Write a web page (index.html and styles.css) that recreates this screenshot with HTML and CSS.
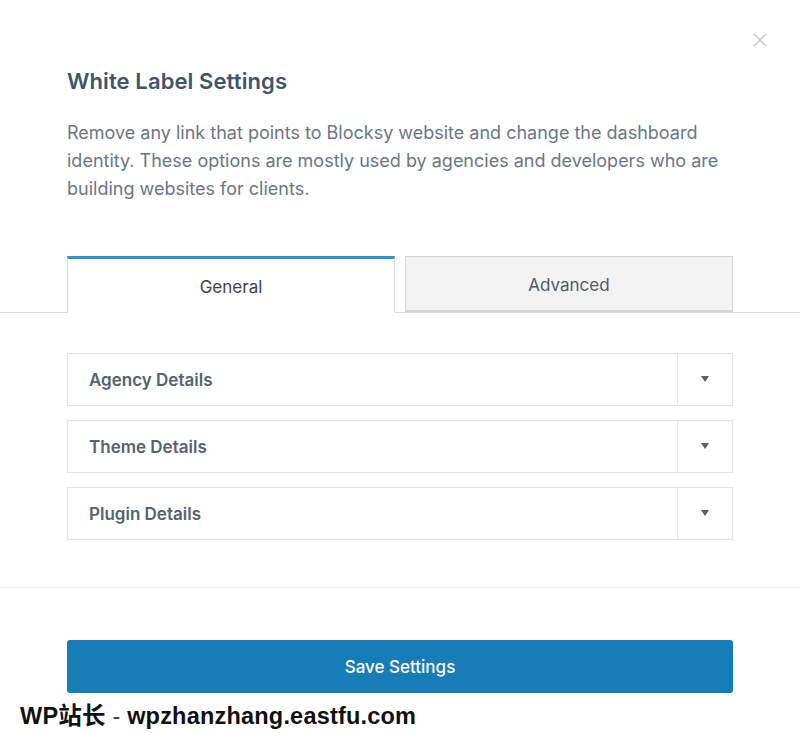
FILE: index.html
```html
<!DOCTYPE html>
<html>
<head>
<meta charset="utf-8">
<link rel="stylesheet" href="styles.css">
</head>
<body>
<div class="modal">
  <button class="close" aria-label="Close">
    <svg width="14" height="14" viewBox="0 0 14 14"><path d="M1 1L13 13M13 1L1 13" stroke="#c7cbd0" stroke-width="1.6" fill="none"/></svg>
  </button>
  <div class="head">
    <h2 class="title">White Label Settings</h2>
    <p class="desc">Remove any link that points to Blocksy website and change the dashboard identity. These options are mostly used by agencies and developers who are building websites for clients.</p>
  </div>
  <div class="tabs-wrap">
    <div class="tabs">
      <div class="tab active">General</div>
      <div class="tab">Advanced</div>
    </div>
  </div>
  <div class="panels">
    <div class="acc"><span class="acc-label">Agency Details</span><span class="acc-toggle"><span class="tri"></span></span></div>
    <div class="acc"><span class="acc-label">Theme Details</span><span class="acc-toggle"><span class="tri"></span></span></div>
    <div class="acc"><span class="acc-label">Plugin Details</span><span class="acc-toggle"><span class="tri"></span></span></div>
  </div>
  <div class="footer">
    <button class="save">Save Settings</button>
  </div>
  <div class="watermark"><b>WP站长</b><span class="dash"> - </span><b>wpzhanzhang.eastfu.com</b></div>
</div>
</body>
</html>
```

FILE: styles.css
```css
* { box-sizing: border-box; }
html, body { margin: 0; padding: 0; background: #fff; }
body { font-family: Inter, "Noto Sans", sans-serif; width: 800px; height: 733px; overflow: hidden; }
.modal { position: relative; width: 800px; height: 733px; }
.close { position: absolute; top: 33px; left: 753px; border: 0; background: none; padding: 0; width: 14px; height: 14px; }
.close svg { display: block; }
.head { padding: 66px 67px 0 67px; }
.title { margin: 0; font-size: 22px; font-weight: 600; color: #3f5569; line-height: 30px; letter-spacing: 0.1px; }
.desc { margin: 23px 0 0 0; font-size: 18px; line-height: 28px; color: #6a7786; letter-spacing: 0; }
.tabs-wrap { margin-top: 53px; border-bottom: 1px solid #dcdcdc; }
.tabs { display: flex; gap: 10px; padding: 0 67px; }
.tab { flex: 1; height: 56px; display: flex; align-items: center; justify-content: center; font-size: 17px; color: #4f5a66; }
.tab.active { background: #fff; border: 1px solid #dcdcdc; border-top: 3px solid #2b95d4; border-bottom: 0; height: 57px; margin-bottom: -1px; padding-top: 1px; color: #3c434a; }
.tab:not(.active) { background: #f3f3f3; border: 1px solid #d6d6d6; border-bottom-width: 2px; margin-bottom: 0; padding-top: 2px; }
.panels { padding: 40px 67px 47px; display: flex; flex-direction: column; gap: 14px; border-bottom: 1px solid #efefef; }
.acc { display: flex; height: 53px; border: 1px solid #e4e4e4; background: #fff; }
.acc-label { flex: 1; display: flex; align-items: center; padding-left: 21px; font-size: 17px; font-weight: 600; color: #55626f; }
.acc-toggle { width: 55px; border-left: 1px solid #e4e4e4; display: flex; align-items: center; justify-content: center; }
.tri { width: 0; height: 0; border-left: 4.5px solid transparent; border-right: 4.5px solid transparent; border-top: 6px solid #595f66; margin-left: 0; margin-top: -2px; }
.footer { padding: 52px 67px 0; }
.save { display: block; width: 100%; height: 53px; border: 0; border-radius: 3px; background: #177db9; color: #fff; font-family: Inter, "Noto Sans", sans-serif; font-size: 17px; font-weight: 500; }
.watermark { position: absolute; left: 20px; top: 697px; font-family: "Liberation Sans", "Noto Sans CJK SC", sans-serif; font-size: 23.5px; color: #111; letter-spacing: 0.2px; }
.watermark b { font-weight: 700; }
.dash { font-weight: 400; color: #444; }
```
